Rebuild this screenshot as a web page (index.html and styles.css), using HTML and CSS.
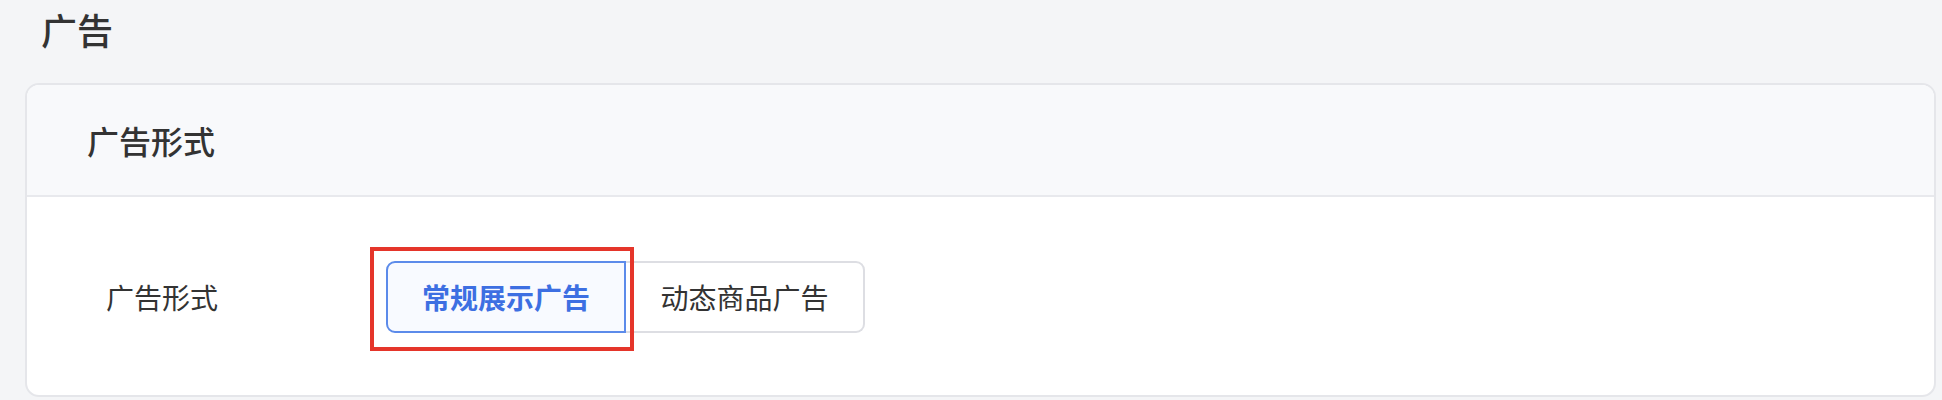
FILE: index.html
```html
<!DOCTYPE html>
<html lang="zh-CN">
<head>
<meta charset="utf-8">
<title>广告</title>
<link rel="stylesheet" href="styles.css">
</head>
<body>
<div class="page">
  <h1 class="page-title">广告</h1>
  <section class="card">
    <header class="card-header">广告形式</header>
    <div class="card-body">
      <div class="form-row">
        <div class="form-label">广告形式</div>
        <div class="segmented">
          <span class="highlight"></span>
          <button class="seg seg-active">常规展示广告</button>
          <button class="seg">动态商品广告</button>
        </div>
      </div>
    </div>
  </section>
</div>
</body>
</html>
```

FILE: styles.css
```css
* { box-sizing: border-box; }
html, body {
  margin: 0;
  padding: 0;
  background: #f4f5f7;
  font-family: "Noto Sans CJK SC", "Noto Sans", sans-serif;
  color: #333;
}
.page {
  padding: 5px 6px 0 25px;
}
.page-title {
  margin: 0 0 30px 16px;
  font-size: 36px;
  line-height: 48px;
  font-weight: 500;
  color: #333;
}
.card {
  border: 2px solid #e5e6ea;
  border-radius: 14px;
  background: #fff;
  overflow: hidden;
}
.card-header {
  height: 112px;
  display: flex;
  align-items: center;
  padding-left: 60px;
  background: #f8f9fb;
  border-bottom: 2px solid #e8e9ed;
  font-size: 32px;
  font-weight: 500;
  color: #333;
}
.card-body {
  padding: 64px 0 62px 79px;
}
.form-row {
  display: flex;
  align-items: center;
}
.form-label {
  width: 280px;
  font-size: 28px;
  color: #333;
}
.segmented {
  position: relative;
  display: flex;
}
.seg {
  height: 72px;
  width: 239px;
  padding: 0;
  font-family: inherit;
  font-size: 28px;
  color: #333;
  background: #fff;
  border: 2px solid #dddee3;
  border-left: none;
  border-radius: 0 9px 9px 0;
}
.seg-active {
  width: 240px;
  color: #3d6fe2;
  font-weight: 700;
  background: #f8faff;
  border: 2px solid #5c8bea;
  border-radius: 9px 0 0 9px;
}
.highlight {
  position: absolute;
  left: -16px;
  top: -14px;
  width: 264px;
  height: 104px;
  border: 4px solid #e5352a;
  pointer-events: none;
}
```
